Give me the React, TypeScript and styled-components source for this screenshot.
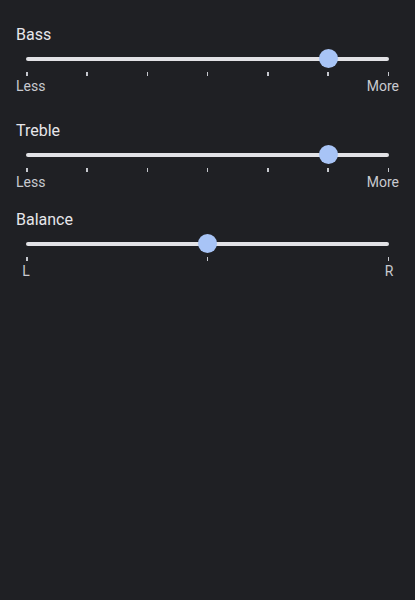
import { createGlobalStyle, styled } from 'styled-components';

interface SliderSpec {
  title: string;
  value: number;
  steps: number;
  left: string;
  right: string;
  gap: number;
}

const sliders: SliderSpec[] = [
  { title: 'Bass', value: 5 / 6, steps: 6, left: 'Less', right: 'More', gap: 25 },
  { title: 'Treble', value: 5 / 6, steps: 6, left: 'Less', right: 'More', gap: 25 },
  { title: 'Balance', value: 0.5, steps: 2, left: 'L', right: 'R', gap: 18 }
];

const App = () => {
  return (
    <>
      <GlobalStyle />
      <Page>
        {sliders.map((s) => (
          <Section key={s.title} $gap={s.gap}>
            <Title>{s.title}</Title>
            <SliderBox>
              <Track />
              <Thumb style={{ left: `calc(10px + (100% - 20px) * ${s.value})` }} />
            </SliderBox>
            <Ticks>
              {Array.from({ length: s.steps + 1 }).map((_, i) => (
                <Tick key={i} />
              ))}
            </Ticks>
            <Labels>
              <Label>{s.left}</Label>
              <Label>{s.right}</Label>
            </Labels>
          </Section>
        ))}
      </Page>
    </>
  );
};

export default App;

const GlobalStyle = createGlobalStyle`
  html, body {
    margin: 0;
    background: #1f2024;
  }
  body {
    font-family: Roboto, "Noto Sans", sans-serif;
  }
`;

const Page = styled.div`
  width: 415px;
  height: 600px;
  box-sizing: border-box;
  padding: 0 16px;
  background: #1f2024;
  overflow: hidden;
`;

const Section = styled.div<{ $gap: number }>`
  display: flex;
  flex-direction: column;
  padding-top: ${(p) => p.$gap}px;
`;

const Title = styled.div`
  font-size: 16px;
  line-height: 20px;
  color: #e6e6ea;
`;

const SliderBox = styled.div`
  position: relative;
  height: 28px;
  display: flex;
  align-items: center;
  padding: 0 10px;
`;

const Track = styled.div`
  flex: 1;
  height: 4px;
  border-radius: 2px;
  background: #e2e2e6;
`;

const Thumb = styled.div`
  position: absolute;
  top: 50%;
  width: 19px;
  height: 19px;
  margin: -10px 0 0 -9.5px;
  border-radius: 50%;
  background: #a8c4f6;
`;

const Ticks = styled.div`
  display: flex;
  justify-content: space-between;
  padding: 0 10px;
  margin-top: -1px;
  height: 4px;
`;

const Tick = styled.div`
  width: 1.5px;
  height: 4px;
  background: #c4c6cc;
`;

const Labels = styled.div`
  display: flex;
  justify-content: space-between;
  font-size: 14px;
  line-height: 20px;
  color: #c8cad0;
`;

const Label = styled.span`
  min-width: 20px;
  text-align: center;
`;
